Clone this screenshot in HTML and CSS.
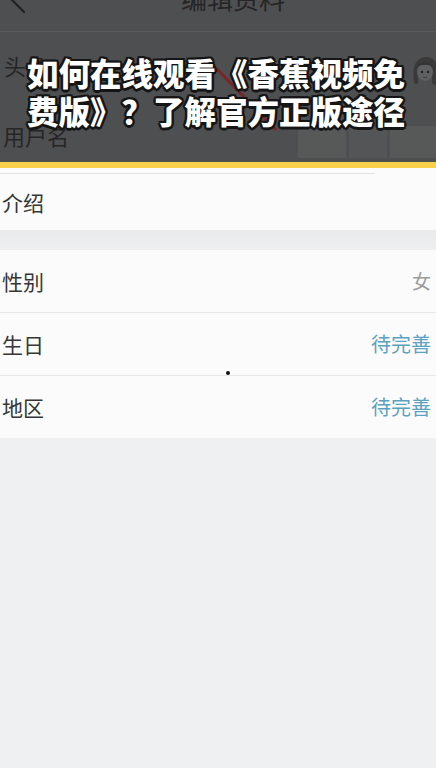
FILE: index.html
```html
<!DOCTYPE html>
<html lang="zh-CN">
<head>
<meta charset="utf-8">
<title>编辑资料</title>
<link rel="stylesheet" href="styles.css">
</head>
<body>
<div class="screen">
  <header class="dim">
    <div class="nav">
      <svg class="back" width="24" height="24" viewBox="0 0 24 24"><path d="M18 -8 L8 4 L20 16" fill="none" stroke="#222" stroke-width="2.2" stroke-linecap="round"/></svg>
      <span class="nav-title">编辑资料</span>
    </div>
    <div class="dim-row avatar-row">
      <span class="dim-label">头像</span>
      <svg class="avatar" width="30" height="36" viewBox="0 0 30 36">
        <path d="M4 30 C2 18 4 6 16 5 C27 5 30 16 28 30 C25 34 22 33 22 30 L22 20 L8 20 L8 30 C7 33 5 33 4 30Z" fill="#3a3a3b"/>
        <ellipse cx="15" cy="20" rx="8" ry="9" fill="#5f6061"/>
        <path d="M7 15 C10 9 20 9 23 15 C19 12 12 12 7 15Z" fill="#333"/>
        <circle cx="12" cy="20" r="1.2" fill="#222"/>
        <circle cx="18" cy="20" r="1.2" fill="#222"/>
        <path d="M13 25 Q15 26.5 17 25" fill="none" stroke="#333" stroke-width="0.8"/>
      </svg>
    </div>
    <div class="dim-row user-row">
      <span class="dim-label">用户名</span>
      <div class="blur-boxes">
        <span class="blur b1"></span><span class="blur b2"></span><span class="blur b3"></span>
      </div>
    </div>
    <svg class="red-mark" width="80" height="80" viewBox="0 0 80 80"><line x1="4" y1="4" x2="64" y2="66" stroke="#7a2424" stroke-width="3"/></svg>
    <h1 class="headline">如何在线观看《香蕉视频免<br>费版》？了解官方正版途径</h1>
  </header>
  <div class="accent"></div>
  <div class="under-user"><span class="under-line"></span></div>
  <div class="list-row intro-row"><span class="label">介绍</span></div>
  <div class="gap"></div>
  <section class="group">
    <div class="list-row"><span class="label">性别</span><span class="value">女</span></div>
    <div class="list-row"><span class="label">生日</span><span class="value link">待完善</span></div>
    <div class="list-row last"><span class="label">地区</span><span class="value link">待完善</span></div>
    <span class="dot"></span>
  </section>
</div>
</body>
</html>
```

FILE: styles.css
```css
html, body {
  margin: 0;
  padding: 0;
}
body {
  width: 436px;
  height: 768px;
  overflow: hidden;
  background: #eff0f2;
  font-family: "Noto Sans CJK SC", "Noto Sans", sans-serif;
}
.screen {
  width: 436px;
  height: 768px;
  background: #eff0f2;
}
.dim {
  position: relative;
  height: 162px;
  background: #4e4f50;
  overflow: hidden;
}
.nav {
  position: relative;
  height: 31px;
  border-bottom: 1px solid #58595a;
  display: flex;
  justify-content: center;
}
.back {
  position: absolute;
  left: 4px;
  top: -4px;
}
.nav-title {
  margin-top: -15px;
  margin-left: 30px;
  font-size: 26px;
  line-height: 26px;
  color: #252525;
}
.dim-row {
  display: flex;
  align-items: center;
  justify-content: space-between;
  padding-left: 4px;
}
.avatar-row {
  height: 66px;
}
.user-row {
  height: 62px;
  align-items: flex-end;
}
.dim-label {
  font-size: 22px;
  line-height: 26px;
  color: #262626;
}
.user-row .dim-label {
  margin-bottom: 12px;
  margin-left: -1px;
}
.avatar {
  margin-right: -4px;
  margin-top: 10px;
}
.blur-boxes {
  display: flex;
  gap: 3px;
  margin-bottom: 2px;
}
.blur {
  height: 32px;
  background: #575858;
}
.b1 { width: 48px; }
.b2 { width: 38px; background: #545556; }
.b3 { width: 46px; }
.red-mark {
  position: absolute;
  left: 212px;
  top: 64px;
}
.headline {
  position: absolute;
  left: 27px;
  top: 53px;
  margin: 0;
  font-size: 31.5px;
  line-height: 38px;
  font-weight: 900;
  color: #ffffff;
  letter-spacing: 0;
  white-space: nowrap;
  text-shadow:
    2.5px 0 0 #151515, -2.5px 0 0 #151515, 0 2.5px 0 #151515, 0 -2.5px 0 #151515,
    1.8px 1.8px 0 #151515, -1.8px 1.8px 0 #151515, 1.8px -1.8px 0 #151515, -1.8px -1.8px 0 #151515;
}
.accent {
  height: 6px;
  background: #f8d04a;
}
.under-user {
  height: 6px;
  background: #fbfbfb;
  display: flex;
  align-items: flex-end;
}
.under-line {
  width: 375px;
  height: 1px;
  background: #e3e3e3;
}
.list-row {
  display: flex;
  align-items: center;
  justify-content: space-between;
  height: 62px;
  padding: 0 5px 0 2px;
  background: #fbfbfb;
  border-bottom: 1px solid #e6e7e8;
}
.list-row.last {
  border-bottom: none;
}
.intro-row {
  height: 56px;
  border-bottom: 1px solid #e8e9ea;
}
.gap {
  height: 19px;
  background: linear-gradient(#e9eaec, #eeeff1);
}
.group {
  position: relative;
}
.label {
  font-size: 21px;
  line-height: 26px;
  color: #363636;
}
.value {
  font-size: 19px;
  line-height: 24px;
  color: #9a9a9a;
}
.value.link {
  font-size: 20px;
  color: #5ba2c1;
}
.dot {
  position: absolute;
  left: 226px;
  top: 121px;
  width: 4px;
  height: 4px;
  border-radius: 50%;
  background: #111;
}
```
